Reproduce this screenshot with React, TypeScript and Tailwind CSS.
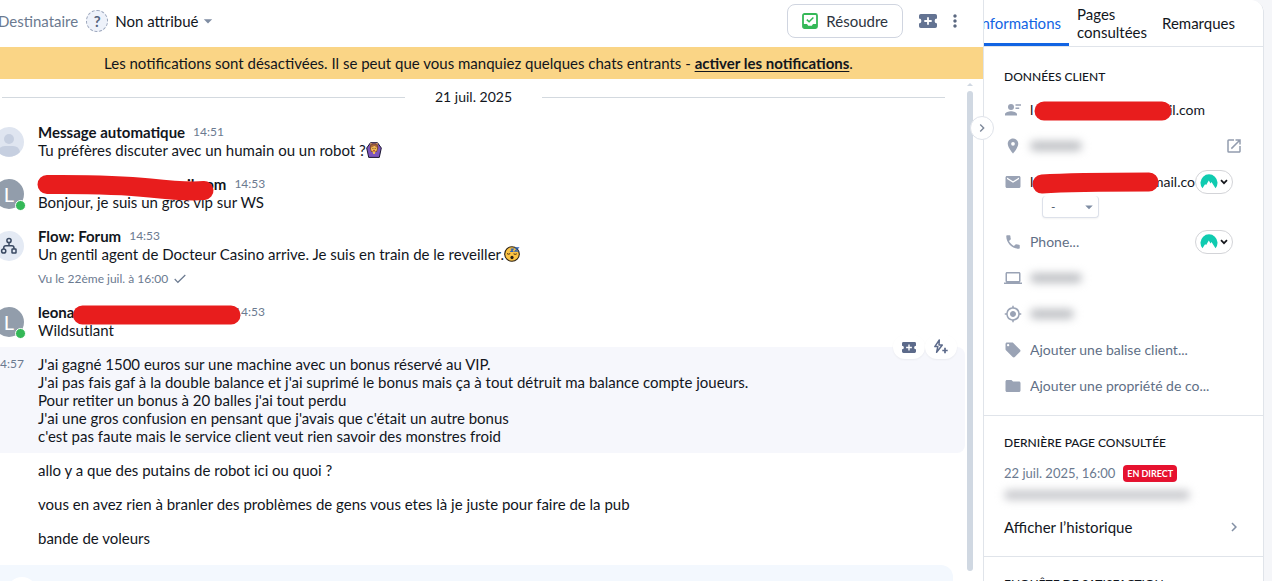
import React, { type ReactNode } from "react";
import {
  MdArrowDropDown,
  MdChevronRight,
  MdEmail,
  MdFolder,
  MdGpsFixed,
  MdLaptop,
  MdLocalOffer,
  MdLocationOn,
  MdMoreVert,
  MdOpenInNew,
  MdPhone,
} from "react-icons/md";

const TicketIcon = ({ className }: { className: string }) => (
  <svg viewBox="0 0 18 14" className={className} fill="currentColor" aria-hidden="true">
    <path
      fillRule="evenodd"
      d="M1.8 0h14.4Q18 0 18 1.8V4.6a2.4 2.4 0 0 0 0 4.8v2.8Q18 14 16.200 14H1.8Q0 14 0 12.200V9.400a2.400 2.400 0 0 0 0-4.800V1.800Q0 0 1.800 0ZM8.100 3.300v2.800H5.300v1.800h2.800v2.800h1.800V7.900h2.800V6.100H9.900V3.300Z"
    />
  </svg>
);

const BoltPlusIcon = () => (
  <svg viewBox="0 0 16 16" className="size-4" fill="none" stroke="currentColor" aria-hidden="true">
    <path d="M6.300 1 1.800 7.600h3L3.600 13.300 9.300 6H6Z" strokeWidth="1.500" strokeLinejoin="round" />
    <path d="M12 8.800v5.400M9.300 11.500h5.400" strokeWidth="1.700" />
  </svg>
);

const ResolveIcon = () => (
  <svg viewBox="0 0 16 16" className="size-4" fill="none" stroke="#34b857" aria-hidden="true">
    <rect x="1" y="1" width="14" height="14" rx="1.500" strokeWidth="1.800" />
    <path d="M1 11h4l1.200 1.800h3.600L11 11h4v4H1Z" fill="#34b857" stroke="none" />
    <path d="m4.800 6.600 2.300 2.200 4.300-4.300" strokeWidth="1.500" />
  </svg>
);

const ContactIcon = () => (
  <svg viewBox="0 0 16 14" className="h-[14px] w-4" fill="currentColor" aria-hidden="true">
    <circle cx="6" cy="4" r="3" />
    <path d="M0 12.500V11.200C0 9.200 3.800 8.200 6 8.200s6 1 6 3v1.300ZM10.500 1.300H16v1.500h-5.500ZM10.500 4.600h3.700v1.500h-3.700Z" />
  </svg>
);

const FlowIcon = () => (
  <svg viewBox="0 0 18 18" className="size-[18px]" fill="none" stroke="#3a4a63" strokeWidth="1.500" aria-hidden="true">
    <circle cx="9" cy="3.500" r="2.100" />
    <circle cx="3.700" cy="14" r="2.100" />
    <rect x="12" y="12" width="4" height="4" rx="0.500" />
    <path d="M9 5.600v3M3.700 11.900V11q0-2.200 2.200-2.200h6q2.100 0 2.100 2.200v1" />
  </svg>
);

const GestureEmoji = () => (
  <svg viewBox="0 0 16 16" className="size-4" role="img" aria-label="Femme faisant un geste d'accord">
    <path d="M4.500.700h7L15.300 6l-2 9.400H2.700L.700 6Z" fill="#7d55bd" stroke="#1c1730" strokeWidth="1" strokeLinejoin="round" />
    <path d="M4.500 1.500h7l.8 4.500-1.500 4H5.200L3.700 6Z" fill="#87502f" />
    <circle cx="8" cy="6.800" r="3" fill="#f6bd55" />
    <path d="M5 5.300Q7.500 5 8.500 3.600q1 1.400 2.500 1.700V3.500L8 2.300 5 3.500Z" fill="#a9673f" />
    <path d="M6.700 10h2.600L8.800 12H7.200ZM4 1.200l2.500.3-2 1ZM12 1.200l-2.500.3 2 1Z" fill="#f6bd55" />
    <path d="M6.500 6.400h.9M8.700 6.400h.9" stroke="#3a2018" strokeWidth="0.900" />
    <path d="M7 8.200q1 .8 2 0" stroke="#a52b27" strokeWidth="0.800" fill="none" />
  </svg>
);

const SleepEmoji = () => (
  <svg viewBox="0 0 16 16" className="size-4" role="img" aria-label="Visage endormi">
    <circle cx="8" cy="8" r="7.300" fill="#fbc343" stroke="#2b2115" strokeWidth="1.100" />
    <path d="M3 7.600q1.600 1.200 3.200 0M9.600 7.800q1.600 1.200 3.200 0" stroke="#4a2d12" strokeWidth="1" fill="none" />
    <ellipse cx="8" cy="11.500" rx="1.600" ry="1.700" fill="#2b2115" />
    <path d="M6.800 3.200h2.400L7 5.400h2.400M10.800 1.800h3.400l-3.200 3.400h3.600" stroke="#2f62b5" strokeWidth="1.200" fill="none" />
  </svg>
);

const Redaction = ({ path, className }: { path: string; className: string }) => (
  <svg className={`absolute z-10 overflow-visible ${className}`} fill="none" stroke="#e81d1d" strokeWidth="19" strokeLinecap="round" aria-hidden="true">
    <path d={path} />
  </svg>
);

const VaultButton = ({ label }: { label: string }) => (
  <button
    aria-label={label}
    className="absolute top-1/2 right-[30px] z-10 flex h-6 w-[38px] -translate-y-1/2 items-center justify-center gap-0.5 rounded-full border border-[#d3d4d8] bg-white"
  >
    <svg viewBox="0 0 18 16" className="h-4 w-[18px] shrink-0" aria-hidden="true">
      <path
        d="M2.500 14.300A8.500 8.500 0 1 1 15.500 14.300L11.500 8l-1 1.600L8.800 6.500 6 11.300l-.8-1.200Z"
        fill="#10cbb0"
      />
    </svg>
    <svg viewBox="0 0 8 6" className="h-1.5 w-2" fill="none" stroke="#16181d" strokeWidth="1.700" aria-hidden="true">
      <path d="m1 1.200 3 3 3-3" />
    </svg>
  </button>
);

const LetterAvatar = () => (
  <div className="relative flex size-[30px] items-center justify-center rounded-full bg-[#929dab] text-xl text-white">
    L
    <span className="absolute -right-0.5 -bottom-0.5 size-[11px] rounded-full border border-white bg-[#34b857]" />
  </div>
);

const PersonAvatar = () => (
  <svg viewBox="0 0 30 30" className="size-[30px]" aria-hidden="true">
    <circle cx="15" cy="15" r="15" fill="#dfe5f0" />
    <circle cx="15" cy="12" r="5" fill="#c6cfe0" />
    <path d="M4 25q1-6 7-6h8q6 0 7 6a15 15 0 0 1-22 0Z" fill="#c6cfe0" />
  </svg>
);

function Message({ avatar, author, time, children }: { avatar: ReactNode; author: ReactNode; time: string; children: ReactNode }) {
  return (
    <article className="flex gap-3.5 py-2">
      <div className="-ml-1.5 w-[30px] shrink-0 pt-1">{avatar}</div>
      <div className="min-w-0 flex-1">
        <div className="flex gap-2">
          <h3 className="relative flex font-bold">{author}</h3>
          <time className="text-xs leading-[18px] text-[#6b7a90]">{time}</time>
        </div>
        <p className="flex items-center">{children}</p>
      </div>
    </article>
  );
}

function Row({ icon, children }: { icon: ReactNode; children: ReactNode }) {
  return (
    <div className="relative flex h-9 items-center gap-2 pr-6 pl-5 text-sm leading-[18px]">
      <span className="flex w-[18px] shrink-0 justify-center text-lg text-[#9aa3b5]">{icon}</span>
      {children}
    </div>
  );
}

const field = "min-w-0 flex-1 bg-transparent text-[#5f6f86] outline-none placeholder:text-[#5f6f86]";

function Conversation() {
  return (
    <main className="flex min-w-0 flex-1 flex-col">
      <header className="flex h-[47px] shrink-0 items-center pb-1.5">
        <span className="-ml-0.5 text-[#6b7a90]">Destinataire</span>
        <button className="ml-2 flex items-center">
          <span className="flex size-[22px] items-center justify-center rounded-full border border-dashed border-[#9aa5bb] bg-[#eef2fa] font-bold text-[#56657e]">
            ?
          </span>
          <span className="ml-[7px]">Non attribué</span>
          <MdArrowDropDown className="size-5 text-[#7f8da3]" />
        </button>
        <button className="ml-auto flex h-[34px] items-center gap-2 rounded-lg border border-[#d0d5e0] px-3.5 text-[#2d3440]">
          <ResolveIcon />
          Résoudre
        </button>
        <button aria-label="Créer un ticket" className="ml-4 text-[#637392]">
          <TicketIcon className="h-[14px] w-[18px]" />
        </button>
        <button aria-label="Plus d'options" className="mr-[18px] ml-2 text-[#5b6880]">
          <MdMoreVert className="size-5" />
        </button>
      </header>
      <div className="flex h-8 shrink-0 items-center justify-center bg-[#fad586] pr-[26px]">
        <p>
          Les notifications sont désactivées. Il se peut que vous manquiez quelques chats entrants -{" "}
          <a href="#notifications" className="font-bold underline underline-offset-2">
            activer les notifications
          </a>
          .
        </p>
      </div>

      <div className="flex min-h-0 flex-1">
        <div className="min-w-0 flex-1 overflow-hidden">
          <div className="mr-5 ml-0.5 flex h-9 items-center gap-[30px]">
            <span className="h-px flex-1 bg-[#d3d9df]" />
            <time className="text-sm">21 juil. 2025</time>
            <span className="h-px flex-1 bg-[#d3d9df]" />
          </div>

          <Message avatar={<PersonAvatar />} author="Message automatique" time="14:51">
            Tu préfères discuter avec un humain ou un robot ?<GestureEmoji />
          </Message>
          <Message
            avatar={<LetterAvatar />}
            author={
              <>
                <Redaction path="M9 9.500Q75 9 112 13T166 15.500" className="top-0 left-0 h-6 w-44" />
                <span className="pl-[149px]">il.com</span>
              </>
            }
            time="14:53"
          >
            Bonjour, je suis un gros vip sur WS
          </Message>
          <Message
            avatar={
              <div className="flex size-[30px] items-center justify-center rounded-full bg-[#e4eaf4]">
                <FlowIcon />
              </div>
            }
            author="Flow: Forum"
            time="14:53"
          >
            Un gentil agent de Docteur Casino arrive. Je suis en train de le reveiller.
            <SleepEmoji />
          </Message>
          <p className="mb-2 flex h-4 items-center gap-1.5 pl-[38px] text-xs text-[#6b7a90]">
            Vu le 22ème juil. à 16:00
            <svg viewBox="0 0 12 10" className="h-2.5 w-3" fill="none" stroke="currentColor" strokeWidth="1.200" aria-hidden="true">
              <path d="m.700 5 3.200 3.300L11.300 1" />
            </svg>
          </p>
          <Message
            avatar={<LetterAvatar />}
            author={
              <>
                <span className="w-[188px]">leona</span>
                <Redaction path="M44.500 12H193" className="top-0 left-0 h-5 w-[202px]" />
              </>
            }
            time="14:53"
          >
            Wildsutlant
          </Message>

          <article className="relative flex rounded-r-lg bg-[#f6f7fc] py-2">
            <time className="-ml-[7px] w-[45px] shrink-0 text-xs leading-[18px] text-[#6b7a90]">14:57</time>
            <p>
              J'ai gagné 1500 euros sur une machine avec un bonus réservé au VIP.
              <br />
              J'ai pas fais gaf à la double balance et j'ai suprimé le bonus mais ça à tout détruit ma balance compte joueurs.
              <br />
              Pour retiter un bonus à 20 balles j'ai tout perdu
              <br />
              J'ai une gros confusion en pensant que j'avais que c'était un autre bonus
              <br />
              c'est pas faute mais le service client veut rien savoir des monstres froid
            </p>
            <div className="absolute -top-3 right-2 flex text-[#5c6a8a]">
              <button aria-label="Créer un ticket" className="flex h-6 w-8 items-center justify-center rounded-full bg-white shadow-xs">
                <TicketIcon className="h-[11px] w-[14px]" />
              </button>
              <button aria-label="Ajouter une réponse rapide" className="flex h-6 w-8 items-center justify-center rounded-full bg-white shadow-xs">
                <BoltPlusIcon />
              </button>
            </div>
          </article>
          <p className="py-2 pl-[38px]">allo y a que des putains de robot ici ou quoi ?</p>
          <p className="py-2 pl-[38px]">vous en avez rien à branler des problèmes de gens vous etes là je juste pour faire de la pub</p>
          <p className="py-2 pl-[38px]">bande de voleurs</p>
          <article className="mt-2.5 mr-3 flex gap-2 rounded-tr-xl bg-[#f3f8fe] pt-3 pl-[7px]">
            <span className="size-[30px] rounded-full bg-white" />
            <h3 className="font-bold">Camille</h3>
          </article>
        </div>
        <div className="flex w-[18px] shrink-0 flex-col items-center pr-2 pb-2.5" aria-hidden="true">
          <svg viewBox="0 0 6 12" className="h-3 w-1.5 shrink-0" fill="#d0d8e2">
            <path d="M0 7 3 4l3 3Z" />
          </svg>
          <span className="w-1.5 flex-1 rounded-full bg-[#d0d8e2]" />
        </div>
      </div>
    </main>
  );
}

function Details() {
  return (
    <aside className="relative w-[281px] shrink-0 rounded-tr-xl border-r border-l border-[#e0e4ea] bg-white">
      <button
        aria-label="Réduire le panneau"
        className="absolute top-[116px] -left-3.5 z-20 flex size-6 items-center justify-center rounded-full border border-[#dfe3ea] bg-white text-[#7c8799]"
      >
        <MdChevronRight className="size-4" />
      </button>
      <div className="flex h-full flex-col overflow-hidden">
        <nav role="tablist" className="flex h-[47px] shrink-0 border-b border-[#e0e4ea]">
          <div className="flex w-[85px] shrink-0 justify-end overflow-hidden border-b-[3px] border-[#1264e3]">
            <button role="tab" aria-selected="true" className="shrink-0 pt-0.5 pr-2 text-[#1264e3]">
              Informations
            </button>
          </div>
          <button role="tab" aria-selected="false" className="w-[85px] shrink-0 px-2 text-left">
            Pages consultées
          </button>
          <button role="tab" aria-selected="false" className="px-2">
            Remarques
          </button>
        </nav>

        <section className="shrink-0 border-b border-[#e0e4ea] pt-[21px] pb-[11px]">
          <h2 className="mb-1.5 pl-5 text-xs leading-[18px] font-medium">DONNÉES CLIENT</h2>
          <Row icon={<ContactIcon />}>
            <div className="relative flex">
              <span className="w-[139px]">l</span>
              <span>il.com</span>
              <Redaction path="M14 10H132" className="top-0 left-0 h-5 w-36" />
            </div>
          </Row>
          <Row icon={<MdLocationOn />}>
            <span className="h-2.5 w-[52px] rounded-full bg-[#bfc1c5] blur-[4px]" />
            <a href="#carte" aria-label="Ouvrir la carte" className="ml-auto -mr-1 text-lg text-[#929cae]">
              <MdOpenInNew />
            </a>
          </Row>
          <Row icon={<MdEmail />}>
            <div className="relative flex min-w-0 overflow-hidden">
              <span className="w-[122px] shrink-0">l</span>
              <span>mail.co</span>
            </div>
            <Redaction path="M9 11Q40 9 116 9" className="top-[9px] left-[49px] h-5 w-32" />
            <VaultButton label="Remplir l'adresse e-mail" />
          </Row>
          <div className="-mt-1 mb-1 flex h-6 pl-[58px]">
            <div className="relative h-[22px] w-[57px] rounded-sm border border-t-0 border-[#dde1ea] bg-white shadow-xs">
              <select aria-label="Statut de l'adresse" className="h-full w-full appearance-none bg-transparent pl-2 text-xs text-[#4c586c]">
                <option>-</option>
              </select>
              <MdArrowDropDown className="pointer-events-none absolute top-0.5 right-0 size-[18px] text-[#7f8da3]" />
            </div>
          </div>
          <Row icon={<MdPhone />}>
            <input aria-label="Téléphone" placeholder="Phone..." className={field} />
            <VaultButton label="Remplir le téléphone" />
          </Row>
          <Row icon={<MdLaptop />}>
            <span className="h-2.5 w-[52px] rounded-full bg-[#bfc1c5] blur-[4px]" />
          </Row>
          <Row icon={<MdGpsFixed />}>
            <span className="h-2.5 w-11 rounded-full bg-[#bfc1c5] blur-[4px]" />
          </Row>
          <Row icon={<MdLocalOffer />}>
            <input aria-label="Balise client" placeholder="Ajouter une balise client..." className={field} />
          </Row>
          <Row icon={<MdFolder />}>
            <input aria-label="Propriété de contact" placeholder="Ajouter une propriété de co..." className={field} />
          </Row>
        </section>

        <section className="shrink-0 border-b border-[#e0e4ea] pt-[18px] pb-5 pl-5">
          <h2 className="text-xs leading-[18px] font-medium">DERNIÈRE PAGE CONSULTÉE</h2>
          <div className="mt-3 flex items-center gap-2 text-xs leading-[18px] text-[#6b7a90]">
            <time className="text-[13px]">22 juil. 2025, 16:00</time>
            <span className="rounded-sm bg-[#e6122f] px-1 text-[9px] leading-[17px] font-bold text-white">EN DIRECT</span>
          </div>
          <div className="mt-2 h-2.5 w-[186px] rounded-full bg-[#c9cace] blur-[4px]" />
          <button className="mt-[18px] flex w-full items-center justify-between pr-5">
            Afficher l’historique
            <MdChevronRight className="size-[18px] text-[#8390a5]" />
          </button>
        </section>

        <section className="shrink-0 pt-[18px] pl-5">
          <h2 className="text-xs leading-[18px] font-medium">ENQUÊTE DE SATISFACTION</h2>
        </section>
      </div>
    </aside>
  );
}

export default function App() {
  return (
    <div className="flex h-screen overflow-hidden bg-[#f5f6f9] pr-2 font-['Lato',sans-serif] text-[15px] leading-[18px] text-[#12161d]">
      <div className="flex min-w-0 flex-1 overflow-hidden rounded-tr-xl bg-white">
        <Conversation />
        <Details />
      </div>
    </div>
  );
}
